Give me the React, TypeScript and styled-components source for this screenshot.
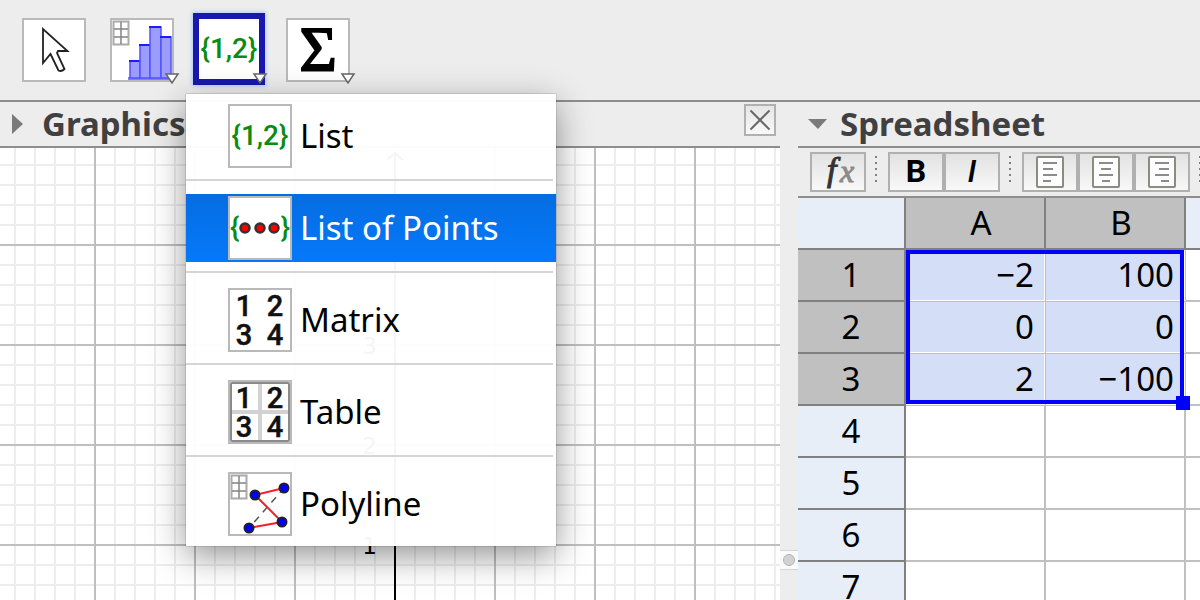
import React from "react";
import styled, { createGlobalStyle, css } from "styled-components";

const SANS = `"Noto Sans", "Open Sans", sans-serif`;
const ICON_SANS = `Roboto, "Liberation Sans", sans-serif`;
const ICON_SERIF = `"Liberation Serif", serif`;
const LINE = "#8e8e8e";

const GlobalStyle = createGlobalStyle`
  *, *::before, *::after { box-sizing: border-box; }
  body {
    margin: 0;
    background: #ededed;
    font-family: ${SANS};
    color: #000;
  }
  button { font: inherit; color: inherit; }
`;

const Page = styled.div`
  height: 100vh;
  display: flex;
  flex-direction: column;
  overflow: hidden;
`;

const Toolbar = styled.header`
  display: flex;
  align-items: flex-start;
  gap: 24px;
  flex: none;
  height: 102px;
  padding: 18px 22px;
  border-bottom: 2px solid ${LINE};
`;

const ToolSlot = styled.div`
  position: relative;
  width: 64px;
  height: 64px;
`;

const ToolButton = styled.button<{ $active?: boolean }>`
  display: flex;
  align-items: center;
  justify-content: center;
  width: 64px;
  height: 64px;
  padding: 0;
  background: #fff;
  border: 2px solid #b9b9b9;
  ${(p) =>
    p.$active &&
    css`
      width: 72px;
      height: 72px;
      margin: -5px;
      border: 6px solid #1818ad;
      box-shadow: 0 0 4px 1px #a9c8f8;
    `}
`;

const IconFrame = styled.span<{ $border?: boolean }>`
  display: block;
  flex: none;
  width: 64px;
  height: 64px;
  margin: ${(p) => (p.$border ? "0" : "-2px")};
  background: ${(p) => (p.$border ? "#fff" : "transparent")};
  box-shadow: ${(p) => (p.$border ? "inset 0 0 0 2px #b9b9b9" : "none")};
  svg { display: block; overflow: visible; }
`;

const MoreMark = styled.svg`
  position: absolute;
  right: -6px;
  bottom: -3px;
`;

const Menu = styled.div`
  position: absolute;
  z-index: 5;
  top: 76px;
  left: -12px;
  width: 370px;
  padding: 8px 0;
  background: rgba(255, 255, 255, 0.96);
  box-shadow: 0 0 1px rgba(0, 0, 0, 0.6), 0 10px 32px rgba(0, 0, 0, 0.42);
`;

const MenuItem = styled.button<{ $selected?: boolean }>`
  display: flex;
  align-items: center;
  gap: 8px;
  width: 100%;
  height: 68px;
  padding: 0 0 0 42px;
  border: 0;
  background: ${(p) =>
    p.$selected
      ? "linear-gradient(rgba(0, 106, 225, 0.98), rgba(0, 118, 250, 0.98))"
      : "transparent"};
  color: ${(p) => (p.$selected ? "#fff" : "#000")};
  font-size: 33px;
  line-height: 46px;
  text-align: left;
  white-space: nowrap;
`;

const MenuRule = styled.hr`
  height: 2px;
  margin: 9px 3px 13px 0;
  border: 0;
  background: #d5d5d5;
`;

const Workspace = styled.main`
  flex: 1;
  min-height: 0;
  display: grid;
  grid-template-columns: minmax(0, 130fr) 18px minmax(0, 67fr);
`;

const Panel = styled.section`
  display: flex;
  flex-direction: column;
  min-width: 0;
  min-height: 0;
  overflow: hidden;
`;

const PanelHeader = styled.div`
  display: flex;
  align-items: center;
  flex: none;
  height: 46px;
  padding: 0 4px 0 8px;
  border-bottom: 2px solid ${LINE};
`;

const Disclosure = styled.button`
  width: 34px;
  height: 24px;
  padding: 0;
  border: 0;
  background: none;
  svg { display: block; }
`;

const PanelTitle = styled.h2`
  flex: 1;
  margin: 0;
  color: #404040;
  font-size: 33px;
  line-height: 44px;
  font-weight: 700;
`;

const CloseButton = styled.button`
  width: 32px;
  height: 32px;
  margin-bottom: 8px;
  padding: 0;
  border: 2px solid #b0b0b0;
  background: linear-gradient(#e6e6e6, #f8f8f8);
  svg { display: block; }
`;

const Plot = styled.svg`
  display: block;
  flex: 1;
  width: 100%;
  min-height: 0;
  background: #fff;
`;

const Splitter = styled.div`
  display: flex;
  flex-direction: column;
  justify-content: flex-end;
  padding-bottom: 30px;
`;

const SplitterHandle = styled.div`
  display: flex;
  align-items: center;
  justify-content: center;
  height: 20px;
  background: #fafafa;
  border: solid #d6d6d6;
  border-width: 1px 0;
  &::before {
    content: "";
    width: 12px;
    height: 12px;
    border: 1px solid #b2b2b2;
    border-radius: 50%;
    background: #d2d2d2;
  }
`;

const FormatBar = styled.div`
  display: flex;
  flex: none;
  height: 50px;
  padding: 4px 0 4px 12px;
  border-bottom: 2px solid ${LINE};
`;

const FormatButton = styled.button<{ $bold?: boolean; $italic?: boolean }>`
  display: flex;
  align-items: center;
  justify-content: center;
  flex: none;
  width: 56px;
  height: 40px;
  padding: 0 0 3px;
  border: 2px solid #b0b0b0;
  background: linear-gradient(#e2e2e2, #f8f8f8);
  font-family: ${ICON_SANS};
  font-size: 32px;
  line-height: 36px;
  font-weight: ${(p) => (p.$bold ? 700 : p.$italic ? 500 : 400)};
  font-style: ${(p) => (p.$italic ? "italic" : "normal")};
  svg { display: block; margin-bottom: -3px; overflow: visible; }
`;

const DotRule = styled.span`
  flex: none;
  width: 2px;
  height: 26px;
  margin: 4px 11px 0 9px;
  background: repeating-linear-gradient(#808080 0 2px, transparent 2px 6px);
`;

const SheetArea = styled.div`
  position: relative;
  flex: 1;
  min-height: 0;
  overflow: hidden;
  background: #fff;
`;

const Sheet = styled.table`
  width: 528px;
  table-layout: fixed;
  border-collapse: separate;
  border-spacing: 0;
  font-size: 33px;
  line-height: 46px;
`;

const RowHeadCol = styled.col`
  width: 108px;
`;

const DataCol = styled.col`
  width: 140px;
`;

const Head = styled.th<{ $selected?: boolean }>`
  height: 52px;
  padding: 0;
  font-weight: 400;
  text-align: center;
  border: solid #808080;
  border-width: 0 2px 2px 0;
  background: ${(p) => (p.$selected ? "#c0c0c0" : "#e7eef8")};
  thead & { padding-left: 12px; }
`;

const Cell = styled.td<{ $selected?: boolean }>`
  height: 52px;
  padding: 0 10px 0 0;
  text-align: right;
  border: solid #c0c0c0;
  border-width: 0 2px 2px 0;
  ${(p) =>
    p.$selected &&
    css`
      background: #d4dff7;
      border-width: 0 1px 1px 0;
      padding: 0 11px 1px 0;
      box-shadow: inset -1px -1px 0 #fff;
    `}
`;

const Selection = styled.div`
  position: absolute;
  top: 52px;
  left: 108px;
  width: 278px;
  height: 154px;
  border: 4px solid #00f;
  pointer-events: none;
  &::after {
    content: "";
    position: absolute;
    right: -10px;
    bottom: -10px;
    width: 14px;
    height: 14px;
    background: #00f;
  }
`;

function PointerIcon() {
  return (
    <svg width="64" height="64" viewBox="0 0 64 64">
      <path
        d="M21 11V45L28.500 36L36.500 52.500Q39.500 54 42.500 51L35 35L36 33H45.500Z"
        fill="#fff"
        stroke="#222"
        strokeWidth="1.800"
      />
    </svg>
  );
}

function MiniGrid() {
  return (
    <g fill="none">
      <rect x="3.500" y="3.500" width="15" height="23" fill="#fff" stroke="#aaa" strokeWidth="2" />
      <path d="M11 4V26M4 11H18M4 19H18" stroke="#848484" strokeWidth="1.500" />
    </g>
  );
}

function HistogramIcon() {
  const bars = [
    [20, 43, 10],
    [30, 27, 10],
    [40, 9, 11],
    [51, 19, 10],
  ];
  return (
    <svg width="64" height="64" viewBox="0 0 64 64">
      <MiniGrid />
      <rect x="18" y="59" width="44" height="3" fill="#8080ff" />
      {bars.map(([x, y, w]) => (
        <g key={x}>
          <rect x={x} y={y} width={w} height={60 - y} fill="#9c9cff" stroke="#5252ff" strokeWidth="1.500" />
          <path d={`M${x - 1} ${y}H${x + w}`} stroke="#1c1cff" strokeWidth="2" />
        </g>
      ))}
    </svg>
  );
}

function ListIcon() {
  return (
    <svg width="64" height="64" viewBox="0 0 64 64">
      <text x="32" y="41" textAnchor="middle" fontFamily={ICON_SANS} fontSize="28" fontWeight="500" fill="#0a8c14">
        {"{1,2}"}
      </text>
    </svg>
  );
}

function PointsIcon() {
  return (
    <svg width="64" height="64" viewBox="0 0 64 64">
      <g fontFamily={ICON_SANS} fontSize="28" fontWeight="500" fill="#0a8c14">
        <text x="2" y="41">{"{"}</text>
        <text x="62" y="41" textAnchor="end">{"}"}</text>
      </g>
      {[17, 32, 46].map((x) => (
        <circle key={x} cx={x} cy="32" r="4.500" fill="#f00" stroke="#333" strokeWidth="2.500" />
      ))}
    </svg>
  );
}

function NumberBlock() {
  return (
    <g fontFamily={ICON_SANS} fontSize="29" fontWeight="500" textAnchor="middle" fill="#111" stroke="#111" strokeWidth="0.500">
      <text x="16" y="28">1</text>
      <text x="47" y="28">2</text>
      <text x="16" y="57">3</text>
      <text x="47" y="57">4</text>
    </g>
  );
}

function MatrixIcon() {
  return (
    <svg width="64" height="64" viewBox="0 0 64 64">
      <NumberBlock />
    </svg>
  );
}

function TableIcon() {
  return (
    <svg width="64" height="64" viewBox="0 0 64 64">
      <path d="M32 4V60M4 32H60" stroke="#d2d2d2" strokeWidth="4" />
      <rect x="3" y="3" width="58" height="58" rx="1" fill="none" stroke="#8a8a8a" strokeWidth="2" />
      <NumberBlock />
    </svg>
  );
}

function PolylineIcon() {
  const nodes = [
    [27, 23],
    [56, 16],
    [54, 50],
    [21, 56],
  ];
  return (
    <svg width="64" height="64" viewBox="0 0 64 64">
      <MiniGrid />
      <path d="M21 56L56 16" stroke="#555" strokeWidth="1.500" strokeDasharray="7 6" strokeDashoffset="-8" />
      <path d="M56 16L27 23L54 50L21 56" fill="none" stroke="#ff1a2c" strokeWidth="2" />
      {nodes.map(([x, y]) => (
        <circle key={x} cx={x} cy={y} r="4.500" fill="#00f" stroke="#222" strokeWidth="2" />
      ))}
    </svg>
  );
}

function SumIcon() {
  return (
    <svg width="64" height="64" viewBox="0 0 64 64">
      <text x="32" y="53" textAnchor="middle" fontFamily={ICON_SERIF} fontSize="64" stroke="#000" strokeWidth="2">
        Σ
      </text>
    </svg>
  );
}

function More() {
  return (
    <MoreMark width="16" height="12" viewBox="0 0 16 12" aria-hidden="true">
      <path d="M2 1H14L8 10Z" fill="#fff" stroke="#666" strokeWidth="1.500" />
    </MoreMark>
  );
}

function FunctionIcon() {
  return (
    <svg width="52" height="36" viewBox="0 0 52 36" fontFamily={ICON_SERIF} fontStyle="italic">
      <text x="15" y="27" fontSize="34" fill="#333" stroke="#333">f</text>
      <text x="28" y="28" fontSize="32" fill="#8a8a8a" stroke="#8a8a8a">x</text>
    </svg>
  );
}

function AlignIcon({ align }: { align: "left" | "center" | "right" }) {
  const factor = { left: 0, center: 0.5, right: 1 }[align];
  return (
    <svg width="28" height="32" viewBox="0 0 28 32">
      <rect x="1" y="1" width="26" height="30" rx="1" fill="#fdfdfd" stroke="#8b8b82" strokeWidth="2" />
      {[14, 10, 14, 8].map((w, i) => (
        <rect key={i} x={7 + (14 - w) * factor} y={6 + i * 6} width={w} height="2" fill="#8c8c8c" />
      ))}
    </svg>
  );
}

const menuItems = [
  { label: "List", icon: <ListIcon /> },
  { label: "List of Points", icon: <PointsIcon />, selected: true },
  { label: "Matrix", icon: <MatrixIcon /> },
  { label: "Table", icon: <TableIcon /> },
  { label: "Polyline", icon: <PolylineIcon /> },
];

function CreateMenu() {
  return (
    <Menu role="menu" aria-label="Create">
      {menuItems.map((item, i) => (
        <React.Fragment key={item.label}>
          {i > 0 && <MenuRule />}
          <MenuItem role="menuitem" $selected={item.selected}>
            <IconFrame $border aria-hidden="true">{item.icon}</IconFrame>
            {item.label}
          </MenuItem>
        </React.Fragment>
      ))}
    </Menu>
  );
}

function GraphicsPlot() {
  return (
    <Plot role="img" aria-label="Coordinate grid">
      <defs>
        <pattern id="minor" x="14" y="16" width="20" height="20" patternUnits="userSpaceOnUse">
          <path d="M0 1H20M1 0V20" stroke="#000" strokeOpacity="0.07" strokeWidth="2" />
        </pattern>
        <pattern id="major" x="94" y="96" width="100" height="100" patternUnits="userSpaceOnUse">
          <path d="M0 1H100M1 0V100" stroke="#bfbfbf" strokeWidth="2" />
        </pattern>
      </defs>
      <rect width="100%" height="100%" fill="url(#minor)" />
      <rect width="100%" height="100%" fill="url(#major)" />
      <rect x="394" y="5" width="2" height="100%" fill="#000" />
      <path d="M387 12L395 5L403 12" fill="none" stroke="#000" strokeWidth="2" />
      <g fontFamily="DejaVu Sans, sans-serif" fontSize="23" textAnchor="end">
        {[4, 3, 2, 1].map((n, i) => (
          <text key={n} x="377" y={106 + i * 100}>{n}</text>
        ))}
      </g>
    </Plot>
  );
}

const rows = [
  ["−2", "100", ""],
  ["0", "0", ""],
  ["2", "−100", ""],
  ["", "", ""],
  ["", "", ""],
  ["", "", ""],
  ["", "", ""],
];

function Spreadsheet() {
  return (
    <SheetArea>
      <Sheet>
        <colgroup>
          <RowHeadCol />
          <DataCol />
          <DataCol />
          <DataCol />
        </colgroup>
        <thead>
          <tr>
            <Head />
            <Head scope="col" $selected>A</Head>
            <Head scope="col" $selected>B</Head>
            <Head scope="col" />
          </tr>
        </thead>
        <tbody>
          {rows.map((row, r) => (
            <tr key={r}>
              <Head scope="row" $selected={r < 3}>{r + 1}</Head>
              {row.map((value, c) => (
                <Cell key={c} $selected={r < 3 && c < 2}>{value}</Cell>
              ))}
            </tr>
          ))}
        </tbody>
      </Sheet>
      <Selection />
    </SheetArea>
  );
}

export default function App() {
  return (
    <Page>
      <GlobalStyle />
      <Toolbar>
        <ToolSlot>
          <ToolButton aria-label="Move">
            <IconFrame><PointerIcon /></IconFrame>
          </ToolButton>
        </ToolSlot>
        <ToolSlot>
          <ToolButton aria-label="One variable analysis">
            <IconFrame><HistogramIcon /></IconFrame>
          </ToolButton>
          <More />
        </ToolSlot>
        <ToolSlot>
          <ToolButton $active aria-label="List tools" aria-haspopup="menu" aria-expanded>
            <IconFrame><ListIcon /></IconFrame>
          </ToolButton>
          <More />
          <CreateMenu />
        </ToolSlot>
        <ToolSlot>
          <ToolButton aria-label="Sum">
            <IconFrame><SumIcon /></IconFrame>
          </ToolButton>
          <More />
        </ToolSlot>
      </Toolbar>
      <Workspace>
        <Panel>
          <PanelHeader>
            <Disclosure aria-label="Show graphics style bar">
              <svg width="34" height="24" viewBox="0 0 34 24">
                <path d="M4 2L15 12L4 22Z" fill="#7a7a7a" />
              </svg>
            </Disclosure>
            <PanelTitle>Graphics</PanelTitle>
            <CloseButton aria-label="Close graphics">
              <svg width="28" height="28" viewBox="0 0 28 28">
                <path d="M4.500 4.500L23.500 23.500M23.500 4.500L4.500 23.500" stroke="#686868" strokeWidth="2" />
              </svg>
            </CloseButton>
          </PanelHeader>
          <GraphicsPlot />
        </Panel>
        <Splitter>
          <SplitterHandle />
        </Splitter>
        <Panel>
          <PanelHeader>
            <Disclosure aria-label="Hide spreadsheet style bar">
              <svg width="34" height="24" viewBox="0 0 34 24">
                <path d="M2 7H21L12 17Z" fill="#7a7a7a" />
              </svg>
            </Disclosure>
            <PanelTitle>Spreadsheet</PanelTitle>
          </PanelHeader>
          <FormatBar>
            <FormatButton aria-label="Input bar"><FunctionIcon /></FormatButton>
            <DotRule />
            <FormatButton $bold>B</FormatButton>
            <FormatButton $italic>I</FormatButton>
            <DotRule />
            <FormatButton aria-label="Align left"><AlignIcon align="left" /></FormatButton>
            <FormatButton aria-label="Align center"><AlignIcon align="center" /></FormatButton>
            <FormatButton aria-label="Align right"><AlignIcon align="right" /></FormatButton>
            <DotRule />
          </FormatBar>
          <Spreadsheet />
        </Panel>
      </Workspace>
    </Page>
  );
}
